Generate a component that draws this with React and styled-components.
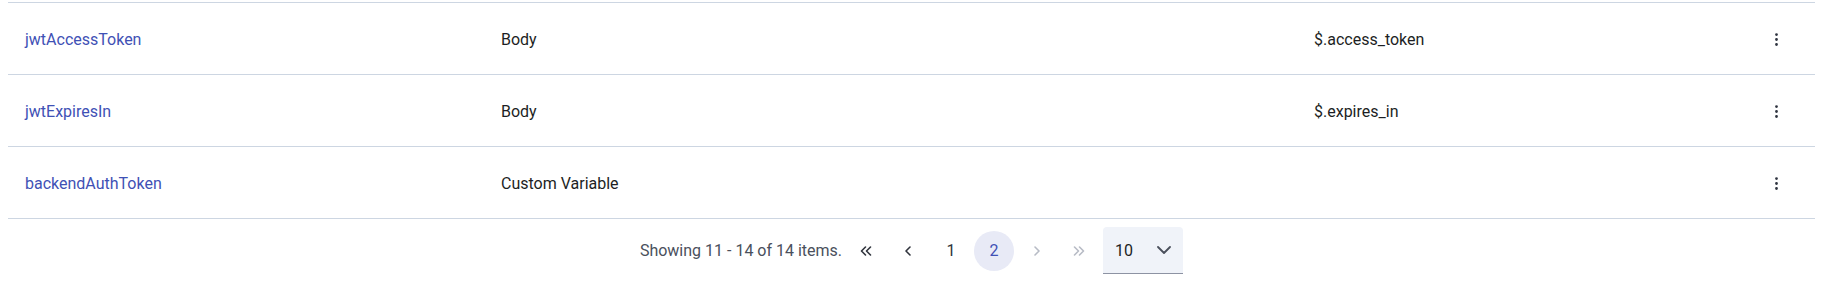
import React from 'react';
import styled, { createGlobalStyle } from 'styled-components';
import { EllipsisVertical } from 'lucide-react';

const GlobalStyle = createGlobalStyle`
body {
  margin: 0;
  background: #ffffff;
  font-family: Roboto, "Liberation Sans", Arial, sans-serif;
}
`

const Page = styled.div`
padding: 2px 12px 0 8px;
`

const Table = styled.div`
border-top: 1px solid #cdd6e2;
`

const Row = styled.div`
height: 70px;
padding: 1px 0 0 17px;
display: grid;
grid-template-columns: 476px 813px 1fr 72px;
align-items: center;
border-bottom: 1px solid #cdd6e2;
font-size: 16px;
color: #1d1f24;
`

const NameCell = styled.a`
color: #3f51b5;
text-decoration: none;
cursor: pointer;
`

const Cell = styled.span`
color: #1d1f24;
`

const MenuButton = styled.button`
justify-self: end;
margin-right: 30px;
width: 17px;
height: 17px;
padding: 0;
border: none;
background: transparent;
color: #2f3440;
display: flex;
align-items: center;
justify-content: center;
cursor: pointer;
`

const Pager = styled.div`
display: flex;
justify-content: center;
align-items: center;
gap: 3px;
padding-top: 8px;
font-size: 16px;
`

const Summary = styled.span`
color: #4a505c;
`

const PageButton = styled.button`
width: 40px;
height: 40px;
border: none;
border-radius: 50%;
padding: 0;
display: flex;
align-items: center;
justify-content: center;
font-family: inherit;
font-size: 16px;
background: ${p => (p.$active ? '#e8eaf6' : 'transparent')};
color: ${p => (p.$active ? '#3f51b5' : p.$disabled ? '#b7bbc5' : '#30343d')};
cursor: ${p => (p.$disabled ? 'default' : 'pointer')};
`

const SizeSelect = styled.div`
width: 80px;
height: 47px;
box-sizing: border-box;
display: flex;
align-items: center;
justify-content: space-between;
padding: 0 12px;
background: #f0f3f9;
border-radius: 4px 4px 0 0;
border-bottom: 1px solid #8d93a3;
color: #1d1f24;
font-size: 16px;
cursor: pointer;
`

const rows = [
  { name: 'jwtAccessToken', source: 'Body', path: '$.access_token' },
  { name: 'jwtExpiresIn', source: 'Body', path: '$.expires_in' },
  { name: 'backendAuthToken', source: 'Custom Variable', path: '' },
];

function Chevron({ double, right }) {
  const d = double
    ? 'M8.5 4 L4.5 8 L8.5 12 M13.5 4 L9.5 8 L13.5 12'
    : 'M10 4 L6 8 L10 12';
  return (
    <svg width="16" height="16" viewBox="0 0 16 16" fill="none" stroke="currentColor"
      strokeWidth="1.6" strokeLinecap="round" strokeLinejoin="round"
      style={right ? { transform: 'scaleX(-1)' } : undefined}>
      <path d={d} />
    </svg>
  );
}

export default function App() {
  return (
    <Page>
      <GlobalStyle />
      <Table>
        {rows.map(r => (
          <Row key={r.name}>
            <NameCell>{r.name}</NameCell>
            <Cell>{r.source}</Cell>
            <Cell>{r.path}</Cell>
            <MenuButton><EllipsisVertical size={17} strokeWidth={2} /></MenuButton>
          </Row>
        ))}
      </Table>
      <Pager>
        <Summary>Showing 11 - 14 of 14 items.</Summary>
        <PageButton><Chevron double /></PageButton>
        <PageButton><Chevron /></PageButton>
        <PageButton>1</PageButton>
        <PageButton $active>2</PageButton>
        <PageButton $disabled><Chevron right /></PageButton>
        <PageButton $disabled><Chevron double right /></PageButton>
        <SizeSelect>
          <span>10</span>
          <svg width="14" height="8" viewBox="0 0 14 8" fill="none" stroke="#4a505c" strokeWidth="1.8" strokeLinecap="round" strokeLinejoin="round">
            <path d="M1 1 L7 7 L13 1" />
          </svg>
        </SizeSelect>
      </Pager>
    </Page>
  );
}
